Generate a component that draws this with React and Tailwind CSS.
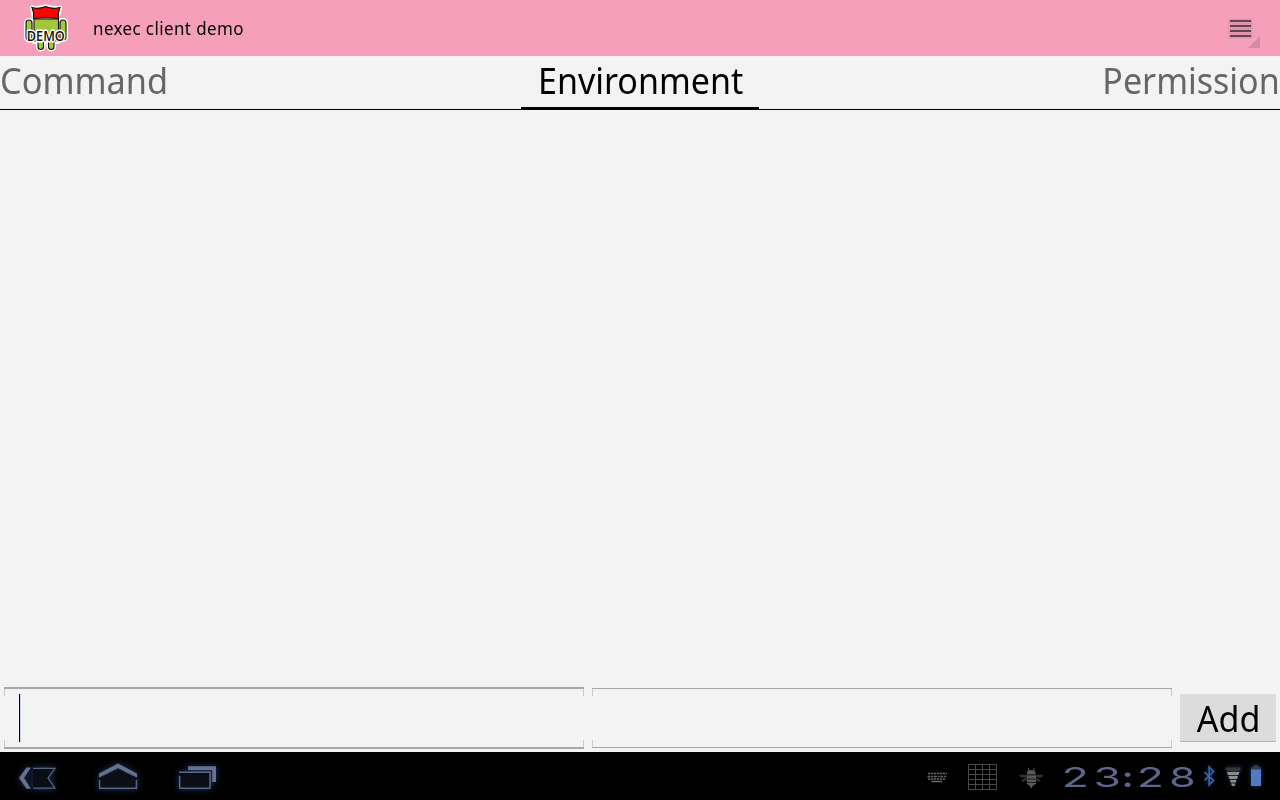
import React from 'react';

function AppLogo() {
  const shape = (
    <>
      <path d="M32 7.500 Q38 9 45.500 6.500 Q53 9 60 7.500 L57.500 19 H34 Z" />
      <rect x="26" y="20" width="6" height="20" rx="3" />
      <rect x="60" y="20" width="6" height="20" rx="3" />
      <path d="M34 19 H58.500 V42 H34 Z" />
      <rect x="38" y="38" width="5.500" height="11.500" rx="2.700" />
      <rect x="48.500" y="38" width="5.500" height="11.500" rx="2.700" />
    </>
  );
  return (
    <svg className="h-14 w-[60px]" viewBox="16 0 60 56">
      <g fill="#fff" stroke="#fff" strokeWidth="4" strokeLinejoin="round">{shape}</g>
      <g fill="#a4c639" stroke="#111" strokeWidth="1.100">
        <rect x="26" y="20" width="6" height="20" rx="3" />
        <rect x="60" y="20" width="6" height="20" rx="3" />
        <rect x="38" y="35" width="5.500" height="14.500" rx="2.700" />
        <rect x="48.500" y="35" width="5.500" height="14.500" rx="2.700" />
        <path d="M34 19 H58.500 V41 H34 Z" />
      </g>
      <path d="M32 7.500 Q38 9.500 45.500 6.500 Q53 9.500 60 7.500 Q57.500 13 58.500 18.500 Q46 17 33.500 18.500 Q34.500 13 32 7.500 Z" fill="#f00" stroke="#111" strokeWidth="1.200" />
      <text x="45.800" y="40.800" textAnchor="middle" textLength="38" lengthAdjust="spacingAndGlyphs" fontFamily="Open Sans, sans-serif" fontSize="15" fontWeight="600" fill="#111" stroke="#fff" strokeWidth="2.800" paintOrder="stroke" strokeLinejoin="round">DEMO</text>
    </svg>
  );
}

function MenuIcon() {
  return (
    <svg className="h-14 w-[60px]" viewBox="1220 0 60 56">
      <rect x="1228.500" y="18.500" width="24" height="20" rx="1" fill="#e393ad" />
      <path d="M1230 21H1251M1230 26H1251M1230 31H1251M1230 36H1251" stroke="#614652" strokeWidth="2" />
      <path d="M1260 36V48H1248Z" fill="#d28ba2" />
    </svg>
  );
}

function NavIcons() {
  const glow = 'h-12 w-20 drop-shadow-[0_0_3px_#2b4a80cc]';
  return (
    <div className="flex">
      <svg className={glow} viewBox="0 752 80 48">
        <path d="M26.500 767.500H31L24 778L31 788.700H26.500L19 778Z" fill="#66718f" />
        <path d="M33 768.300H55L48 778L55 788.200H33" fill="#0b0e15" stroke="#5a6685" strokeWidth="1.200" />
      </svg>
      <svg className={glow} viewBox="80 752 80 48">
        <path d="M99.600 778L118 769L136.400 778V788H99.600Z" fill="#0b0e15" />
        <path d="M99 773.500L118 763.500L137 773.500V777.500L118 768L99 777.500Z" fill="#66718f" />
        <path d="M99.600 780V788.200H136.400V780" fill="none" stroke="#5a6685" strokeWidth="1.400" />
      </svg>
      <svg className={glow} viewBox="160 752 80 48">
        <path d="M188 766.200H216V782H212.300V770H188Z" fill="#66718f" />
        <path d="M179 772.300H210V788.200H179.700V776" fill="#0b0e15" stroke="#5a6685" strokeWidth="1.500" />
      </svg>
    </div>
  );
}

function KeyboardIcon() {
  return (
    <svg className="h-12 w-10" viewBox="920 752 40 48">
      <g stroke="#686868" strokeWidth="1.500" fill="none">
        <path d="M928 773.500H947" strokeDasharray="2.200 .8" />
        <path d="M927.500 776.500H947" strokeDasharray="3 .8 1.800 .8" />
        <path d="M928 779H946" strokeDasharray="2.200 .8" />
        <path d="M931.500 781.500H942" />
      </g>
    </svg>
  );
}

function GridIcon() {
  return (
    <svg className="h-12 w-[50px]" viewBox="960 752 50 48">
      <path d="M968.500 764.500H996.500V789.500H968.500ZM975.500 764V790M982.500 764V790M989.500 764V790M968 769.500H997M968 774.500H997M968 779.500H997M968 784.500H997" stroke="#484848" fill="none" />
    </svg>
  );
}

function BeeIcon() {
  return (
    <svg className="h-12 w-[50px]" viewBox="1010 752 50 48">
      <path d="M1027 777.500H1021.500Q1019 777 1019.200 774.800H1027ZM1035.500 777.500H1041Q1043.300 777 1043 774.800H1035.500ZM1027 777L1021 780.500L1023 782L1028 779ZM1035 777L1041 780.500L1039 782L1034 779Z" fill="#303030" />
      <path d="M1028.500 768V771M1034 768V771" stroke="#555" />
      <path d="M1027 773Q1027 770 1031.300 770T1035.500 773V774H1027Z" fill="#5b5b5b" />
      <path d="M1027 774.500H1036V784L1033 785.500L1031.300 788.500L1029.500 785.500L1027 784Z" fill="#5b5b5b" />
      <path d="M1027 775H1036M1027 779H1036M1027 782.500H1036" stroke="#202020" />
    </svg>
  );
}

function Clock() {
  const digit = 'inline-block scale-x-[1.650]';
  return (
    <div className="flex h-12 w-[140px] items-center pt-[3px] pl-[3px] font-['Inter',sans-serif] text-[27px] leading-[34px] font-normal text-[#5c678c]">
      <span className="w-[25px] text-center"><span className={digit}>2</span></span>
      <span className="ml-[7px] w-[25px] text-center"><span className={digit}>3</span></span>
      <span className="ml-[3px] w-2.5 text-center"><span className="inline-block scale-x-[1.300] font-bold">:</span></span>
      <span className="ml-[5px] w-[25px] text-center"><span className={digit}>2</span></span>
      <span className="ml-[7px] w-[25px] text-center"><span className="inline-block scale-x-[1.580]">8</span></span>
    </div>
  );
}

function StatusIcons() {
  return (
    <svg className="h-12 w-20" viewBox="1200 752 80 48">
      <g className="drop-shadow-[0_0_2px_#20498acc]">
        <path d="M1204.500 772L1213.500 780.500L1209.200 785V767L1213.500 771.500L1204.500 780.500" fill="none" stroke="#3f62a0" strokeWidth="1.700" />
        <path d="M1225.500 767.500H1241L1239.700 771H1227Z" fill="#35373c" />
        <path d="M1227 772H1239.500L1238.500 775H1228ZM1228.500 776H1238L1237 779H1229.500ZM1230 780H1236.500L1235.700 782.500H1230.700ZM1231 783.500H1235.400L1234.500 786H1232Z" fill="#8d8e8d" />
        <path d="M1254 765H1258V767H1261V770H1251V767H1254Z" fill="#343b49" />
        <rect x="1251" y="769.500" width="10" height="16.500" fill="#5379c5" />
      </g>
    </svg>
  );
}

function Field({ focused }) {
  const line = focused ? 'h-0.5 bg-[#a8a8a8]' : 'h-px bg-[#a8a8a8]';
  const pad = focused ? 'h-[62px]' : 'h-[60px]';
  return (
    <div className={`flex w-[580px] flex-col ${pad}`}>
      <div className={line} />
      <div className="flex h-[7px] justify-between">
        <i className="w-px bg-[#cbcbcb]" />
        <i className="w-px bg-[#cbcbcb]" />
      </div>
      <div className="flex flex-1 items-center pl-[15px]">
        {focused && <i className="-my-4 h-12 w-0.5 shrink-0 border-r border-[#c6d2ec] bg-black" />}
      </div>
      <div className="flex h-[7px] justify-between">
        <i className="w-px bg-[#cbcbcb]" />
        <i className="w-px bg-[#cbcbcb]" />
      </div>
      <div className={line} />
    </div>
  );
}

export default function App() {
  return (
    <div className="flex h-[800px] w-[1280px] flex-col overflow-hidden bg-[#f3f3f3] font-['Noto_Sans',sans-serif] text-black">
      <header className="flex h-14 shrink-0 items-center justify-between bg-[#f59fbb] pl-4">
        <div className="flex items-center">
          <AppLogo />
          <h1 className="ml-[17px] origin-left scale-x-[0.940] text-[18px] leading-6 tracking-[0.450px]">nexec client demo</h1>
        </div>
        <MenuIcon />
      </header>

      <nav className="grid h-[54px] shrink-0 grid-cols-3 border-b border-black text-[36px] leading-[50px]">
        <span className="origin-left scale-x-[0.953] text-[#666]">Command</span>
        <span className="flex w-[238px] flex-col items-center justify-self-center border-b-2 border-black pl-px">
          <span className="scale-x-[0.945]">Environment</span>
        </span>
        <span className="origin-right scale-x-[0.945] justify-self-end text-[#666]">Permission</span>
      </nav>

      <main className="flex-1" />

      <div className="flex h-[68px] shrink-0 items-center gap-2 px-1">
        <Field focused />
        <Field />
        <button className="flex h-12 w-24 items-center justify-center rounded-[1px] border-b border-[#b5b5b5] bg-[#dcdcdc] pt-0.5 pl-px text-[36px] leading-none">
          <span className="scale-x-[0.945]">Add</span>
        </button>
      </div>

      <footer className="flex h-12 shrink-0 justify-between bg-black">
        <NavIcons />
        <div className="flex">
          <KeyboardIcon />
          <GridIcon />
          <BeeIcon />
          <Clock />
          <StatusIcons />
        </div>
      </footer>
    </div>
  );
}
